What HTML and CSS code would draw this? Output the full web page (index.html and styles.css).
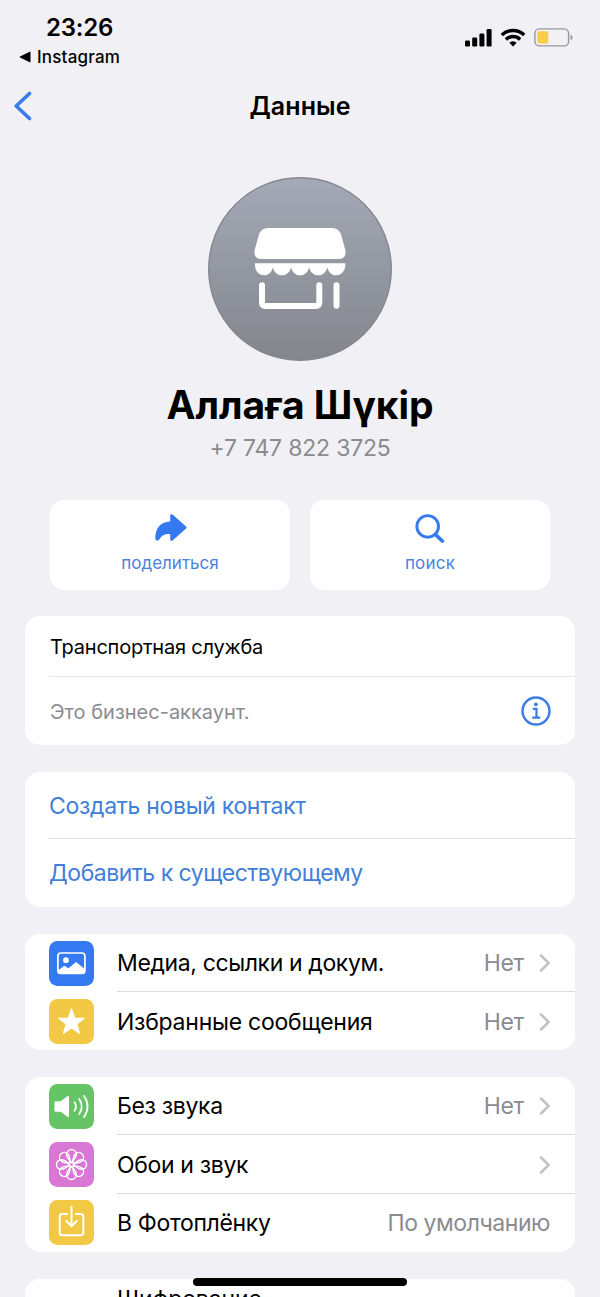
FILE: index.html
```html
<!DOCTYPE html>
<html lang="ru">
<head>
<meta charset="utf-8">
<title>Данные</title>
<link rel="stylesheet" href="styles.css">
</head>
<body>
<div class="screen">
  <header class="status">
    <div class="status-left">
      <div class="clock">23:26</div>
      <div class="return"><svg width="12" height="12" viewBox="0 0 12 12"><path d="M11.500 1.200v9.600c0 .5-.4.6-.8.4L1 6.500c-.5-.3-.5-.7 0-1L10.700.8c.4-.2.8-.1.8.4z"/></svg><span>Instagram</span></div>
    </div>
    <div class="status-icons">
      <svg width="27" height="18" viewBox="0 0 27 18"><rect x="0" y="11.500" width="5" height="6" rx="1.300"/><rect x="7.200" y="8.500" width="5" height="9" rx="1.300"/><rect x="14.400" y="4.500" width="5" height="13" rx="1.300"/><rect x="21.600" y="0" width="5" height="17.500" rx="1.300"/></svg>
      <svg class="wifi" width="26" height="19" viewBox="0 0 26 19"><g fill="none" stroke="#000" stroke-width="3.400"><path d="M1.800 6.900a16.400 16.400 0 0 1 22.400 0"/><path d="M5.900 11.400a10.300 10.300 0 0 1 14.200 0"/></g><path d="M13 18.500l-3.700-3.700a5.600 5.600 0 0 1 7.400 0z"/></svg>
      <svg class="battery" width="39" height="19" viewBox="0 0 39 19"><rect x=".9" y=".9" width="33.700" height="17" rx="4.500" fill="none" stroke="#98989c" stroke-width="1.400"/><rect x="3.300" y="3.200" width="11" height="12.400" rx="2" fill="#f7ce46"/><path d="M36.500 6.500c2.600.8 2.600 5 0 5.800z" fill="#98989c"/></svg>
    </div>
  </header>

  <nav class="nav">
    <svg class="back" width="20" height="32" viewBox="0 0 20 32"><path d="M17.500 3.500L4.200 16l13.300 12.500" fill="none" stroke="#3a7bea" stroke-width="3.600" stroke-linecap="round" stroke-linejoin="round"/></svg>
    <h1 class="nav-title">Данные</h1>
  </nav>

  <section class="profile">
    <svg class="avatar" width="184" height="184" viewBox="0 0 184 184">
      <defs><linearGradient id="avatar-fill" x1="0" y1="0" x2="0" y2="1"><stop offset="0" stop-color="#a4a9b6"/><stop offset="1" stop-color="#83868c"/></linearGradient></defs>
      <circle cx="92" cy="92" r="91.300" fill="url(#avatar-fill)" stroke="#85878f" stroke-width="1.400"/>
      <path d="M60.500 51h63c5 0 8 2.300 9.500 6.500l4.300 15.500c1.300 5.500-1.600 9-6.500 9H53.200c-5 0-7.800-3.500-6.500-9L51 57.500C52.500 53.300 55.500 51 60.500 51z" fill="#fff"/>
      <path d="M47 86.300h90.300v2.200c0 5-4 9.800-9 9.800s-8.500-4.400-9-8.400c-.5 4-4 8.400-9 8.400s-8.700-4.400-9.200-8.400c-.5 4-4 8.400-9 8.400s-8.500-4.400-9-8.400c-.5 4-4.200 8.400-9.200 8.400s-8.500-4.400-9-8.400c-.5 4-4 8.400-9 8.400s-8.900-4.800-8.900-9.800z" fill="#fff"/>
      <path d="M54 108.300v17.200c0 2.200 1 3.500 3.500 3.500h50.200c2.500 0 3.600-1.300 3.600-3.500v-17.200M128.500 108.300v20.500" fill="none" stroke="#fff" stroke-width="6" stroke-linecap="round"/>
    </svg>
    <h2 class="name">Аллаға Шүкір</h2>
    <div class="phone">+7 747 822 3725</div>
  </section>

  <div class="actions">
    <div class="action">
      <svg width="34" height="30" viewBox="0 0 34 30"><path d="M17.200 8.500V2.800c0-1.500 1.500-2 2.600-1L33 13.500c.8.700.8 1.300 0 2L19.800 27.200c-1.100 1-2.600.5-2.600-1V21c-5.800-.2-8.500 1.500-11 5.600-.9 1.500-3.900 1.500-3.900-1.100C2.300 15.800 6.800 9 17.200 8.500z" fill="#3478f2"/></svg>
      <span class="wide">поделиться</span>
    </div>
    <div class="action">
      <svg width="34" height="30" viewBox="0 0 34 30"><g fill="none" stroke="#3478f2"><circle cx="14.700" cy="13.400" r="10.800" stroke-width="2.900"/><path d="M22.800 21.800l6.500 6.200" stroke-width="3.700" stroke-linecap="round"/></g></svg>
      <span class="short">поиск</span>
    </div>
  </div>

  <section class="card about">
    <div class="line category">Транспортная служба</div>
    <div class="line business"><span>Это бизнес-аккаунт.</span>
      <svg width="32" height="32" viewBox="0 0 32 32"><g fill="none" stroke="#3b7de0"><circle cx="16" cy="16" r="13.500" stroke-width="2.400"/><path d="M12.800 13.800h3.700v8.400M12.200 22.600h8" stroke-width="2.200"/></g><circle cx="15.900" cy="9.300" r="1.900" fill="#3b7de0"/></svg>
    </div>
  </section>

  <section class="card contact">
    <div class="line create">Создать новый контакт</div>
    <div class="line add">Добавить к существующему</div>
  </section>

  <section class="card menu">
    <div class="row">
      <svg class="icon" viewBox="0 0 45 45"><rect width="45" height="45" rx="8.500" fill="#3478f2"/><rect x="8.900" y="12" width="27" height="20.500" rx="3" fill="none" stroke="#fff" stroke-width="1.700"/><circle cx="17" cy="19.200" r="2.900" fill="#fff"/><path d="M9 29.500l6.200-4.800 4.300 2.600 7.600-6.200 8.900 7.200v2.600c0 1-.6 1.700-1.700 1.700H10.800C9.700 32.600 9 32 9 31z" fill="#fff"/></svg>
      <div class="cell"><span class="label l-media">Медиа, ссылки и докум.</span><span class="value">Нет</span><svg class="chevron" viewBox="0 0 12 20"><path d="M2 2.500L9.600 10 2 17.500"/></svg></div>
    </div>
    <div class="row">
      <svg class="icon" viewBox="0 0 45 45"><rect width="45" height="45" rx="8.500" fill="#f2c945"/><path d="M22.500 10l3.200 9.100 9.500.2-7.500 5.700 2.700 9.200-7.900-5.500-7.900 5.500 2.700-9.200-7.500-5.700 9.500-.2z" fill="#fff" stroke="#fff" stroke-width="1.300" stroke-linejoin="round"/></svg>
      <div class="cell"><span class="label l-starred">Избранные сообщения</span><span class="value">Нет</span><svg class="chevron" viewBox="0 0 12 20"><path d="M2 2.500L9.600 10 2 17.500"/></svg></div>
    </div>
  </section>

  <section class="card menu">
    <div class="row">
      <svg class="icon" viewBox="0 0 45 45"><rect width="45" height="45" rx="8.500" fill="#65c466"/><path d="M7 17.200h4.700l6.700-5c.9-.6 1.600-.3 1.600.8v19c0 1.100-.7 1.500-1.600.8l-6.700-5H7c-.9 0-1.500-.5-1.500-1.400v-7.800c0-.9.600-1.400 1.500-1.400z" fill="#fff"/><g fill="none" stroke="#fff" stroke-width="1.800" stroke-linecap="round"><path d="M25.500 18.300c1.800 2.600 1.800 5.800 0 8.400"/><path d="M30.200 15c3.200 4.500 3.200 10.500 0 15"/><path d="M35 12c4.700 6.500 4.700 14.500 0 21"/></g></svg>
      <div class="cell"><span class="label l-mute">Без звука</span><span class="value">Нет</span><svg class="chevron" viewBox="0 0 12 20"><path d="M2 2.500L9.600 10 2 17.500"/></svg></div>
    </div>
    <div class="row">
      <svg class="icon" viewBox="0 0 45 45"><rect width="45" height="45" rx="8.500" fill="#d878d4"/>
        <defs><path id="petal" d="M22.500 20.500C19.500 17.500 17.700 15 17.700 12.300a4.800 4.800 0 0 1 9.600 0c0 2.700-1.800 5.200-4.800 8.200z"/></defs>
        <g fill="none" stroke="#fff" stroke-width="1.400"><use href="#petal"/><use href="#petal" transform="rotate(45 22.500 22.500)"/><use href="#petal" transform="rotate(90 22.500 22.500)"/><use href="#petal" transform="rotate(135 22.500 22.500)"/><use href="#petal" transform="rotate(180 22.500 22.500)"/><use href="#petal" transform="rotate(225 22.500 22.500)"/><use href="#petal" transform="rotate(270 22.500 22.500)"/><use href="#petal" transform="rotate(315 22.500 22.500)"/></g></svg>
      <div class="cell"><span class="label l-wall">Обои и звук</span><svg class="chevron" viewBox="0 0 12 20"><path d="M2 2.500L9.600 10 2 17.500"/></svg></div>
    </div>
    <div class="row">
      <svg class="icon" viewBox="0 0 45 45"><rect width="45" height="45" rx="8.500" fill="#f2c945"/><g fill="none" stroke="#fff" stroke-width="2" stroke-linecap="round" stroke-linejoin="round"><path d="M18 14h-4.700c-1.600 0-2.600 1-2.600 2.600v16c0 1.600 1 2.600 2.600 2.600h18.400c1.600 0 2.600-1 2.600-2.600v-16c0-1.600-1-2.600-2.600-2.600H27"/><path d="M22.500 6.800v19M17.300 21l5.200 5.200 5.200-5.200"/></g></svg>
      <div class="cell"><span class="label l-save">В Фотоплёнку</span><span class="value by-default">По умолчанию</span></div>
    </div>
  </section>

  <section class="card encryption"><span class="label">Шифрование</span></section>
  <div class="home-bar"></div>
</div>
</body>
</html>
```
FILE: styles.css
```css
* { box-sizing: border-box; }
body { margin: 0; background: #f1f0f5; color: #000; font-family: Inter, "Noto Sans", sans-serif; }
svg { display: block; flex: none; }
h1, h2 { margin: 0; }

.screen { position: relative; width: 600px; height: 1297px; overflow: hidden; display: flex; flex-direction: column; }
.screen > * { flex: none; }

.status { height: 75px; display: flex; justify-content: space-between; padding: 13px 27.5px 0 19px; }
.clock { padding-left: 27px; font-size: 24px; line-height: 29px; font-weight: 600; letter-spacing: -0.2px; }
.return { display: flex; align-items: center; gap: 6px; font-size: 17px; line-height: 20px; font-weight: 450; letter-spacing: 0.2px; margin-top: 5px; }
.status-icons { display: flex; align-items: flex-start; padding-top: 16px; }
.wifi { margin-left: 8px; margin-top: -1px; }
.battery { margin-left: 8px; margin-top: -1px; }

.nav { height: 102px; display: grid; grid-template-columns: 100px 1fr 100px; align-items: start; padding-top: 15px; }
.back { margin-left: 12px; }
.nav-title { text-align: center; font-size: 25px; line-height: 32px; font-weight: 600; letter-spacing: 0.1px; }

.profile { height: 323px; display: flex; flex-direction: column; align-items: center; }
.name { margin-top: 19px; font-size: 39px; line-height: 50px; font-weight: 700; letter-spacing: -0.1px; }
.phone { margin-top: 4px; font-size: 23px; line-height: 28px; letter-spacing: -0.2px; color: #8b8b8f; }

.actions { display: grid; grid-template-columns: 1fr 1fr; gap: 20px; padding: 0 50px; height: 90px; }
.action { background: #fff; border-radius: 14px; display: flex; flex-direction: column; align-items: center; padding-top: 13px; gap: 10px; font-size: 17px; line-height: 20px; color: #4a82dd; }
.short { letter-spacing: 0.2px; }

.card { margin: 26px 25px 0; background: #fff; border-radius: 15px; padding-left: 24px; }
.line { display: flex; align-items: center; justify-content: space-between; }
.line:first-child { border-bottom: 1px solid #e3e3e6; }
.category { height: 61px; font-size: 20px; letter-spacing: -0.22px; padding: 1px 0 0 1px; }
.business { height: 68px; font-size: 20px; color: #8b8b8f; padding-right: 23px; }
.business span { padding: 1px 0 0 1px; }
.contact { margin-top: 27px; font-size: 23px; color: #417fd9; }
.create { height: 67px; letter-spacing: -0.31px; padding-top: 1px; }
.add { height: 68px; letter-spacing: -0.5px; }

.menu { margin-top: 27px; font-size: 23px; }
.row { height: 58.4px; display: flex; align-items: center; }
.contact + .menu .row { height: 58px; }
.icon { width: 45px; height: 45px; margin-right: 23px; }
.cell { flex: 1; align-self: stretch; display: flex; align-items: center; padding: 1px 25px 0 0; border-bottom: 1px solid #dcdcde; }
.row:last-child .cell { border-bottom: 0; }
.label { flex: 1; white-space: nowrap; }
.value { color: #8b8b8f; letter-spacing: -0.3px; }
.by-default { letter-spacing: -0.45px; }
.l-media { letter-spacing: -0.37px; }
.l-starred { letter-spacing: -0.25px; }
.l-mute, .l-wall, .l-save { letter-spacing: -0.34px; }
.chevron { width: 12px; height: 20px; margin-left: 15px; margin-right: -1px; fill: none; stroke: #c2c2c5; stroke-width: 2.5; stroke-linecap: round; stroke-linejoin: round; }

.encryption { height: 80px; padding: 6px 0 0 92px; margin-top: 26.8px; font-size: 23px; line-height: 28px; letter-spacing: -0.1px; }
.home-bar { position: absolute; left: 193px; top: 1278px; width: 214px; height: 8px; border-radius: 4px; background: #000; }
```
